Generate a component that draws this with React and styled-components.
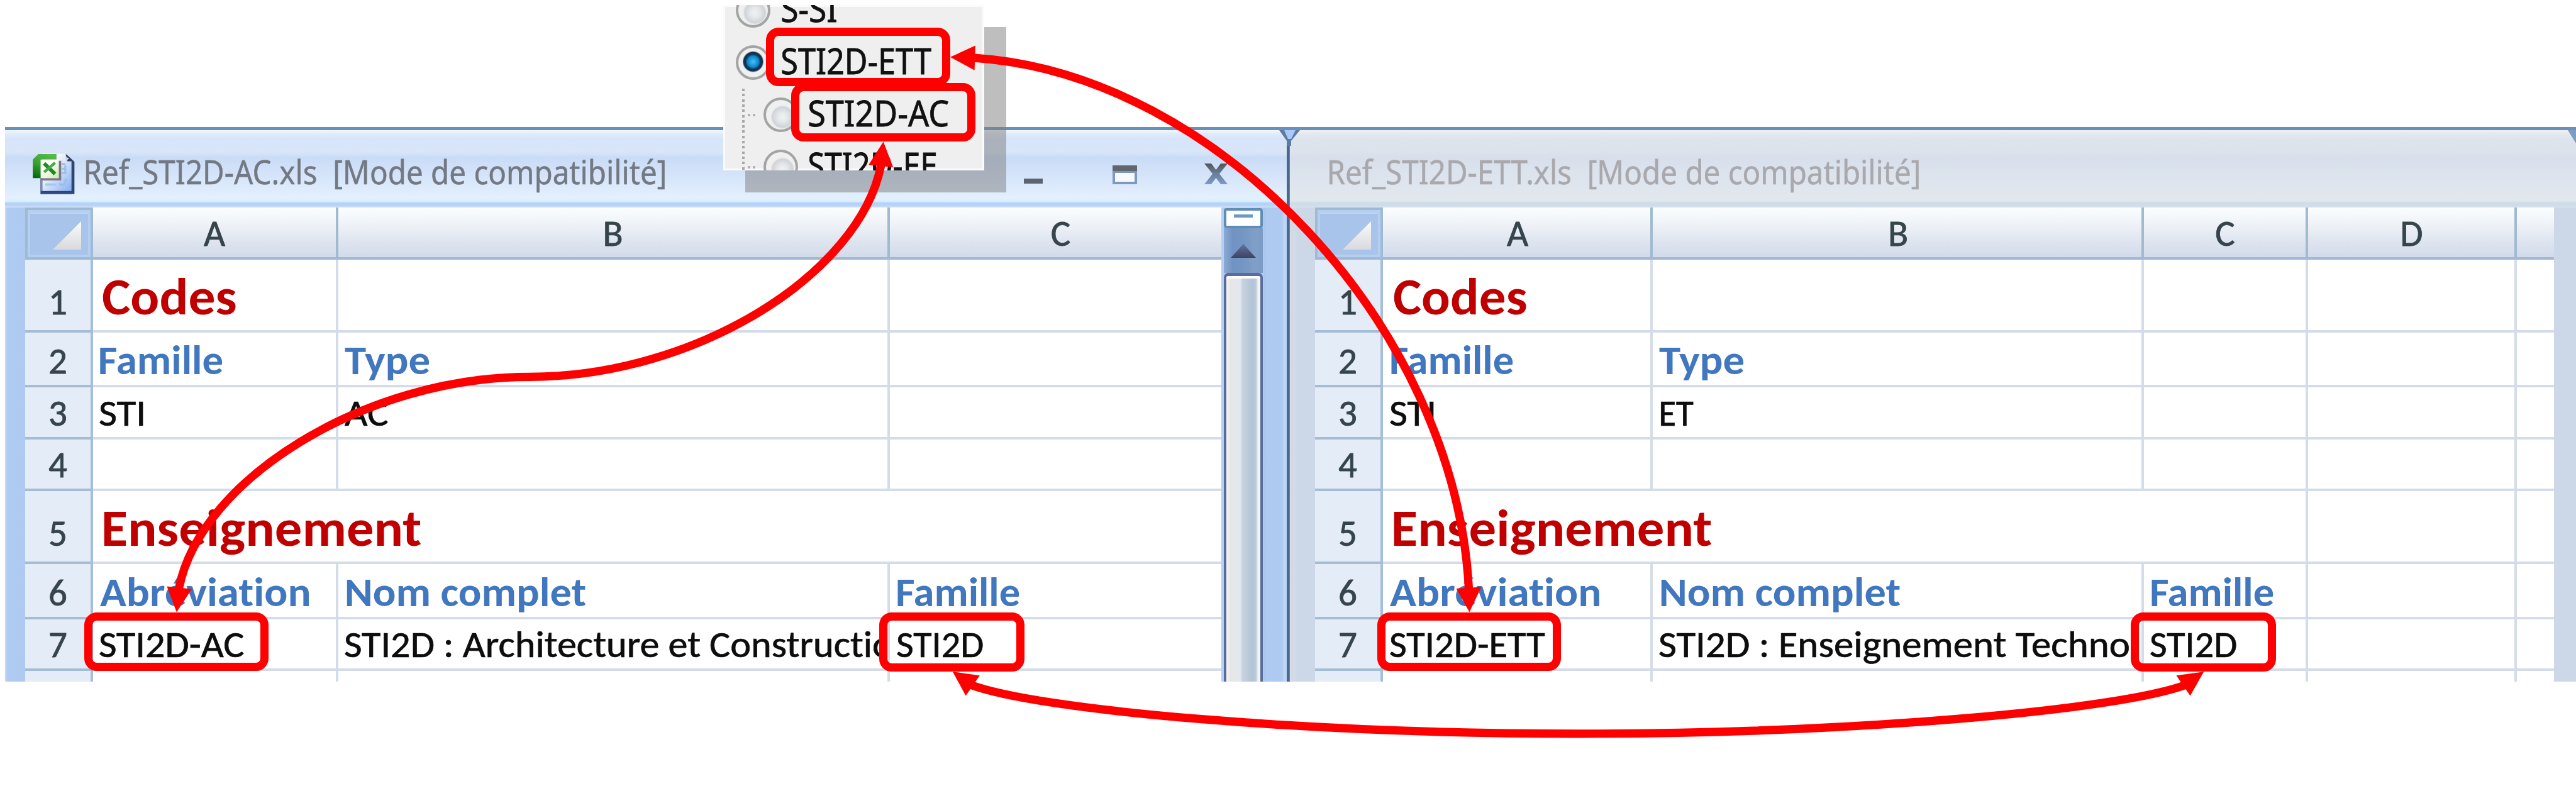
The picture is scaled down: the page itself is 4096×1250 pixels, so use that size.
import React from 'react';
import styled, { createGlobalStyle, css } from 'styled-components';

const GlobalStyle = createGlobalStyle`
  body {
    margin: 0;
    background: #fff;
    overflow: hidden;
  }
  * {
    box-sizing: border-box;
  }
`;

const SHEET_FONT = "Carlito, Lato, 'Liberation Sans', sans-serif";
const UI_FONT = "'Noto Sans', 'Open Sans', sans-serif";

/* ---------- text fitted to a given drawn width ---------- */

const FitBox = styled.span`
  display: inline-block;
  flex: none;
  width: ${(p) => p.$width}px;
  white-space: pre;
`;

const FitInner = styled.span`
  display: inline-block;
  transform-origin: 0 0;
  font-family: ${(p) => p.$family};
  font-size: ${(p) => p.$size}px;
  font-weight: ${(p) => p.$weight};
  font-variant-ligatures: none;
  line-height: ${(p) => p.$line}px;
  color: ${(p) => p.$color};
  -webkit-text-stroke: ${(p) => p.$stroke}px ${(p) => p.$color};
`;

const ruler = document.createElement('canvas').getContext('2d');

function FitText({ text, width, family, size, weight = 400, color, line, lift = 0, stroke = 0 }) {
  ruler.font = `${weight} ${size}px ${family}`;
  ruler.letterSpacing = '0.01px';
  const m = ruler.measureText(text);
  const scale = width / (m.actualBoundingBoxRight + m.actualBoundingBoxLeft);
  const shift = m.actualBoundingBoxLeft * scale;
  return (
    <FitBox $width={width}>
      <FitInner
        $family={family}
        $size={size}
        $weight={weight}
        $color={color}
        $stroke={stroke}
        $line={line || Math.round(size * 1.2)}
        style={{ transform: `translate(${shift}px, ${-lift}px) scaleX(${scale})` }}
      >
        {text}
      </FitInner>
    </FitBox>
  );
}

/* ---------- page ---------- */

const Page = styled.main`
  position: relative;
  width: 4096px;
  height: 1250px;
  overflow: hidden;
  background: #fff;
`;

const Windows = styled.div`
  display: flex;
  height: 1084px;
  padding: 202px 0 0 8px;
`;

const WindowFrame = styled.section`
  display: flex;
  flex: none;
  width: ${(p) => p.$width}px;
  border-top: 5px solid #6a90b8;
`;

const WindowMain = styled.div`
  display: flex;
  flex-direction: column;
  flex: 1;
  min-width: 0;
`;

const WindowEdge = styled.div`
  width: 5px;
  background: linear-gradient(90deg, #4a6c99, #46628a 60%, #7b8da8);
`;

const activeBar = css`
  background: linear-gradient(
    #f1f6fe 0, #e0ebfc 6px, #d7e5fa 14px, #d9e6f8 34px, #c9dcf6 44px,
    #d3e2f9 66px, #e3f0fe 108px, #d9f1ff 113px, #b4d2f8 116px, #b7d3f8 120px, #d6e3f7 123px
  );
`;

const inactiveBar = css`
  background: linear-gradient(
    #edf0f1 0, #e4e9ee 6px, #dde4ee 14px, #dce3ec 34px, #d8dfeb 44px,
    #dbe3ed 66px, #e2e7ee 104px, #e0e9ea 112px, #cddcec 116px, #cfdcea 120px, #dae2ec 123px
  );
`;

const TitleBar = styled.header`
  display: flex;
  flex: none;
  align-items: flex-start;
  height: 123px;
  padding: 35px 93px 0 ${(p) => (p.$active ? 43 : 63)}px;
  ${(p) => (p.$active ? activeBar : inactiveBar)}
`;

const TitleText = styled.h1`
  display: flex;
  margin: 0 auto 0 ${(p) => (p.$active ? 17 : 0)}px;
  font-size: 0;
`;

const ControlSvg = styled.svg`
  flex: none;
  margin: ${(p) => p.$top}px 0 0 ${(p) => p.$gap}px;
`;

const WindowBody = styled.div`
  display: flex;
  flex: 1;
`;

const frameTones = {
  activeLeft: 'linear-gradient(90deg, #c3dafa 0, #b0cbf1 4px, #aecaf0 100%)',
  activeRight: 'linear-gradient(90deg, #a9c5ea 0, #aecaf0 5px, #aecaf0 29px, #bdd6f8 33px, #bdd6f8 100%)',
  inactiveLeft: 'linear-gradient(90deg, #d5d9e0 0, #d2dbe8 8px, #ccd8e8 12px)',
  inactiveRight: 'linear-gradient(90deg, #ccd8e8, #ccd8e8)',
};

const FrameSide = styled.div`
  flex: none;
  width: ${(p) => p.$width}px;
  background: ${(p) => frameTones[p.$tone]};
`;

/* ---------- sheet ---------- */

const Sheet = styled.div`
  display: grid;
  flex: none;
  grid-template-columns: ${(p) => p.$columns};
  grid-template-rows: 83px 116px 87px 83px 82px 116px 88px 82px 17px;
  background: #fff;
`;

const Corner = styled.div`
  display: flex;
  border: 4px solid #a0bad4;
  background: #a9c4ea;
  box-shadow: inset 0 0 0 4px #b3cff2, inset 0 6px 0 0 #bfd5ea;
`;

const headText = css`
  font: 400 59px/71px ${SHEET_FONT};
  color: #35454b;
  -webkit-text-stroke: 0.8px #35454b;
`;

const ColumnHead = styled.div`
  display: flex;
  align-items: flex-end;
  justify-content: center;
  padding: 0 0 2px ${(p) => p.$shift}px;
  background: linear-gradient(#fbfdfe, #eef2f7 35%, #e0e6f0 65%, #d2daea);
  border-bottom: 4px solid #a2b9d4;
  border-right: ${(p) => (p.$last ? '0' : '4px solid #a0bad0')};
  ${headText}
`;

const RowHead = styled.div`
  display: flex;
  align-items: flex-end;
  justify-content: center;
  overflow: hidden;
  padding-bottom: ${(p) => (p.$tall ? 9 : 2)}px;
  background: #e4ecf7;
  border-right: 4px solid #a4bfd8;
  border-bottom: ${(p) => (p.$cut ? '0' : '4px solid #a5bdd4')};
  ${headText}
`;

const Cell = styled.div`
  display: flex;
  align-items: flex-end;
  overflow: hidden;
  min-width: 0;
  grid-column: span ${(p) => p.$span};
  padding: 0 0 ${(p) => p.$base}px ${(p) => p.$indent}px;
  border-right: ${(p) => (p.$last ? '0' : '4px solid #d5dce9')};
  border-bottom: ${(p) => (p.$cut ? '0' : '4px solid #d5dce9')};
  font-size: 0;
`;

const kinds = {
  title: { size: 82, weight: 700, color: '#c00000', base: 4, stroke: 0 },
  label: { size: 64, weight: 700, color: '#4177be', base: 0, stroke: 0 },
  value: { size: 59, weight: 400, color: '#0d0d0d', base: 2, stroke: 0.7 },
};

/* ---------- scroll bar ---------- */

const ScrollBar = styled.div`
  display: flex;
  flex-direction: column;
  flex: none;
  width: 67px;
  padding: 1px 1px 0 4px;
  background: #b3cff5;
`;

const SplitBox = styled.div`
  display: flex;
  justify-content: center;
  flex: none;
  height: 32px;
  padding-top: 6px;
  border: 4px solid #608db4;
  border-radius: 4px;
  background: #fcfeff;
`;

const SplitDash = styled.div`
  width: 30px;
  height: 5px;
  background: #6e98bd;
`;

const UpButton = styled.div`
  display: flex;
  justify-content: center;
  flex: none;
  height: 71px;
  padding-top: 25px;
  background: linear-gradient(90deg, #8dabd2, #7093c3 22%, #7596c3 50%, #809fc8 80%, #7b9bc6);
`;

const Thumb = styled.div`
  flex: 1;
  border: solid #5a6c99;
  border-width: 5px 4px 0;
  border-radius: 7px 7px 0 0;
  background: linear-gradient(
    90deg, #f8f8f8 0, #e6e6e6 6px, #e2e8ef 22px, #c5d1de 26px, #b3c4d7 42px, #bccbd9 47px, #f4f6f8 51px
  );
  box-shadow: inset 0 4px 0 #fbfbfb;
`;

/* ---------- option list ---------- */

const OptionShadow = styled.div`
  position: absolute;
  left: 1185px;
  top: 43px;
  width: 415px;
  height: 263px;
  background: rgba(126, 126, 126, 0.5);
`;

const OptionPanel = styled.div`
  position: absolute;
  left: 1150px;
  top: 8px;
  width: 415px;
  height: 263px;
  overflow: hidden;
  background: #efefef;
  box-shadow: inset 0 0 0 3px #fbfbfb;
`;

const OptionList = styled.ul`
  list-style: none;
  margin: -33px 0 0;
  padding: 0;
`;

const OptionRow = styled.li`
  display: flex;
  align-items: center;
  height: 83px;
  padding-left: ${(p) => (p.$nested ? 30 : 20)}px;
  font-size: 0;
`;

const Branch = styled.span`
  align-self: stretch;
  display: flex;
  align-items: center;
  gap: 4px;
  width: 34px;
  padding-left: 9px;
  background: repeating-linear-gradient(#a9a9a9 0 4px, #efefef 4px 8.3px) 0 0 / 4px 100% no-repeat;
`;

const Dot = styled.i`
  width: 4px;
  height: 4px;
  background: #b4b4b4;
`;

const Radio = styled.span`
  flex: none;
  width: 55px;
  height: 55px;
  margin-right: ${(p) => p.$gap}px;
  border: 4px solid #a3a5a3;
  border-radius: 50%;
  background: ${(p) =>
    p.$checked
      ? 'radial-gradient(circle at 50% 47%, #3fc6f0 0, #1d97dc 6px, #1582c4 9px, #0b3656 12px, #123450 15px, #f0f0f0 17px)'
      : 'radial-gradient(circle at 56% 58%, #f2f2f3 0, #e3e5e7 9px, #cfd3d8 16px, #f0f0f0 19px)'};
`;

/* ---------- annotations ---------- */

const Highlight = styled.div`
  position: absolute;
  left: ${(p) => p.$x}px;
  top: ${(p) => p.$y}px;
  width: ${(p) => p.$w}px;
  height: ${(p) => p.$h}px;
  border: 13px solid #f00;
  border-radius: 20px;
`;

const Arrows = styled.svg`
  position: absolute;
  inset: 0;
`;

function Arrow({ d, trim, heads }) {
  return (
    <g>
      <path
        d={d}
        pathLength="1000"
        fill="none"
        stroke="#f00"
        strokeWidth="13.2"
        strokeDasharray={`0 ${trim} ${1000 - 2 * trim} 1000`}
      />
      {heads.map((points) => (
        <polygon key={points} points={points} fill="#f00" />
      ))}
    </g>
  );
}

const IconSvg = styled.svg`
  flex: none;
`;

function WorkbookIcon() {
  return (
    <IconSvg width="69" height="68" viewBox="70 80 295 290">
      <defs>
        <linearGradient id="pageFill" x1="0" y1="0" x2="1" y2="1">
          <stop offset="0.3" stopColor="#f6f9ff" />
          <stop offset="1" stopColor="#86aef2" />
        </linearGradient>
        <linearGradient id="greenFill" x1="0.6" y1="0" x2="0.2" y2="1">
          <stop offset="0" stopColor="#55b94c" />
          <stop offset="0.5" stopColor="#35a02f" />
          <stop offset="1" stopColor="#006c05" />
        </linearGradient>
        <linearGradient id="tileFill" x1="0" y1="0" x2="1" y2="1">
          <stop offset="0.4" stopColor="#fbfff8" />
          <stop offset="1" stopColor="#cdeaa8" />
        </linearGradient>
      </defs>
      <path d="M128 96H305L358 145V364H128Z" fill="#2c4674" />
      <path d="M136 90H298L338 140V344H136Z" fill="url(#pageFill)" />
      <path d="M298 92L352 142H310Z" fill="#33415f" />
      <path d="M298 112L322 120L304 140Z" fill="#c9d2e2" />
      <path d="M128 260H140V350H338V364H128Z" fill="#2f4b80" />
      <path d="M128 264H137V344H128Z" fill="#8d98b8" />
      <path d="M272 160H296M272 192H296M272 222H290M296 168V228M256 290Q262 305 280 302Q298 298 298 262" fill="none" stroke="#9dbce8" strokeWidth="13" />
      <path d="M160 300H235" stroke="#a9c4ee" strokeWidth="16" />
      <path d="M134 256H252V138H268V272H134Z" fill="#7f7480" />
      <path d="M75 130L112 92H236V130H130V256H75Z" fill="url(#greenFill)" />
      <path d="M128 130H250V256H128Z" fill="url(#tileFill)" />
      <path d="M152 156L226 228" stroke="#1d8a22" strokeWidth="25" />
      <path d="M226 152L152 216" stroke="#49a64c" strokeWidth="19" />
    </IconSvg>
  );
}

function WindowControls() {
  return (
    <>
      <ControlSvg $top={42} $gap={0} width="30" height="8" viewBox="0 0 30 8">
        <rect width="30" height="8" fill="#5c6470" />
      </ControlSvg>
      <ControlSvg $top={21} $gap={111} width="39" height="30" viewBox="0 0 39 30">
        <rect x="2" y="2" width="35" height="26" fill="#f6faff" stroke="#7d99c2" strokeWidth="4" />
        <rect width="39" height="9" fill="#61656c" />
        <rect y="9" width="39" height="3" fill="#7d95ba" />
      </ControlSvg>
      <ControlSvg $top={17} $gap={106} width="39" height="35" viewBox="0 0 39 35">
        <defs>
          <linearGradient id="closeFill" x1="0" y1="0" x2="0" y2="1">
            <stop offset="0.05" stopColor="#55595e" />
            <stop offset="0.45" stopColor="#677c96" />
            <stop offset="1" stopColor="#7d9bc8" />
          </linearGradient>
        </defs>
        <path d="M1 1H12L19.500 11L27 1H38L25 17.500L38 34H27L19.500 24L12 34H1L14 17.500Z" fill="url(#closeFill)" />
      </ControlSvg>
    </>
  );
}

function CornerCell() {
  return (
    <Corner>
      <svg width="100" height="75" viewBox="0 0 100 75">
        <defs>
          <linearGradient id="cornerFill" x1="0" y1="0" x2="0" y2="1">
            <stop offset="0" stopColor="#fbfbfb" />
            <stop offset="1" stopColor="#d9dadf" />
          </linearGradient>
        </defs>
        <path d="M85 18V63H40Z" fill="url(#cornerFill)" />
      </svg>
    </Corner>
  );
}

/* ---------- data ---------- */

const rowFlags = [
  { n: '1', tall: true },
  { n: '2' },
  { n: '3' },
  { n: '4' },
  { n: '5', tall: true },
  { n: '6' },
  { n: '7' },
  { n: '', cut: true },
];

// A cell: [kind, text, drawn width, indent, column span]
const E = [];
const leftSheet = {
  columns: '108px 390px 877px 527px',
  heads: [['A', 0], ['B', 0], ['C', 16]],
  rows: [
    [['title', 'Codes', 212, 14.6], E, E],
    [['label', 'Famille', 195, 11], ['label', 'Type', 135, 9.5], E],
    [['value', 'STI', 70, 10], ['value', 'AC', 69, 9.5], E],
    [E, E, E],
    [['title', 'Enseignement', 505, 17, 3]],
    [['label', 'Abréviation', 332, 10.5], ['label', 'Nom complet', 381, 13], ['label', 'Famille', 194, 12]],
    [['value', 'STI2D-AC', 230, 10], ['value', 'STI2D : Architecture et Constructio', 870, 10], ['value', 'STI2D', 137, 11]],
    [E, E, E],
  ],
};

const rightSheet = {
  columns: '108px 429px 781px 261px 332px 59px',
  heads: [['A', 3], ['B', 3], ['C', 1], ['D', 1], ['', 0]],
  rows: [
    [['title', 'Codes', 211, 17], E, E, E, E],
    [['label', 'Famille', 194, 13], ['label', 'Type', 135, 10], E, E, E],
    [['value', 'STI', 70, 10.5], ['value', 'ET', 52, 13], E, E, E],
    [E, E, E, E, E],
    [['title', 'Enseignement', 506, 17, 3], E, E],
    [['label', 'Abréviation', 333, 10.5], ['label', 'Nom complet', 381, 13], ['label', 'Famille', 194, 12], E, E],
    [['value', 'STI2D-ETT', 247, 10.5], ['value', 'STI2D : Enseignement Techno', 747, 10], ['value', 'STI2D', 137, 10], E, E],
    [E, E, E, E, E],
  ],
};

function SheetView({ sheet }) {
  return (
    <Sheet $columns={sheet.columns}>
      <CornerCell />
      {sheet.heads.map(([name, shift], i) => (
        <ColumnHead key={i} $shift={shift} $last={i === sheet.heads.length - 1}>
          {name}
        </ColumnHead>
      ))}
      {sheet.rows.map((cells, r) => (
        <React.Fragment key={r}>
          <RowHead $tall={rowFlags[r].tall} $cut={rowFlags[r].cut}>
            {rowFlags[r].n}
          </RowHead>
          {cells.map(([kind, text, width, indent = 0, span = 1], c) => {
            const k = kinds[kind] || {};
            return (
              <Cell
                key={c}
                $span={span}
                $indent={indent}
                $base={k.base || 0}
                $last={c === cells.length - 1}
                $cut={rowFlags[r].cut}
              >
                {text && (
                  <FitText
                    text={text}
                    width={width}
                    family={SHEET_FONT}
                    size={k.size}
                    weight={k.weight}
                    color={k.color}
                    stroke={k.stroke}
                  />
                )}
              </Cell>
            );
          })}
        </React.Fragment>
      ))}
    </Sheet>
  );
}

const optionText = { family: UI_FONT, size: 56, color: '#111', line: 76, lift: 4, stroke: 0.8 };
const titleText = { family: UI_FONT, size: 52, line: 70, lift: 4, stroke: 0.5 };

export default function App() {
  return (
    <Page>
      <GlobalStyle />
      <Windows>
        <WindowFrame $width={2043}>
          <WindowMain>
            <TitleBar $active>
              <WorkbookIcon />
              <TitleText $active>
                <FitText
                  text={'Ref_STI2D-AC.xls\u00a0 [Mode de compatibilité]'}
                  width={920}
                  color="#737983"
                  {...titleText}
                />
              </TitleText>
              <WindowControls />
            </TitleBar>
            <WindowBody>
              <FrameSide $width={32} $tone="activeLeft" />
              <SheetView sheet={leftSheet} />
              <ScrollBar>
                <SplitBox>
                  <SplitDash />
                </SplitBox>
                <UpButton>
                  <svg width="40" height="22" viewBox="0 0 40 22">
                    <defs>
                      <linearGradient id="upFill" x1="0" y1="0" x2="0" y2="1">
                        <stop offset="0" stopColor="#65719a" />
                        <stop offset="1" stopColor="#3b4563" />
                      </linearGradient>
                    </defs>
                    <path d="M20 0L40 22H0Z" fill="url(#upFill)" />
                  </svg>
                </UpButton>
                <Thumb />
              </ScrollBar>
              <FrameSide $width={37} $tone="activeRight" />
            </WindowBody>
          </WindowMain>
          <WindowEdge />
        </WindowFrame>
        <WindowFrame $width={2045}>
          <WindowMain>
            <TitleBar>
              <TitleText>
                <FitText
                  text={'Ref_STI2D-ETT.xls\u00a0 [Mode de compatibilité]'}
                  width={937}
                  color="#a9a9ad"
                  {...titleText}
                />
              </TitleText>
            </TitleBar>
            <WindowBody>
              <FrameSide $width={40} $tone="inactiveLeft" />
              <SheetView sheet={rightSheet} />
              <FrameSide $width={35} $tone="inactiveRight" />
            </WindowBody>
          </WindowMain>
        </WindowFrame>
      </Windows>

      <OptionShadow />
      <OptionPanel>
        <OptionList>
          <OptionRow>
            <Radio $gap={18} />
            <FitText text="S-SI" width={87} {...optionText} />
          </OptionRow>
          <OptionRow>
            <Radio $checked $gap={18} />
            <FitText text="STI2D-ETT" width={238} {...optionText} />
          </OptionRow>
          <OptionRow $nested>
            <Branch>
              <Dot />
              <Dot />
            </Branch>
            <Radio $gap={17} />
            <FitText text="STI2D-AC" width={222} {...optionText} />
          </OptionRow>
          <OptionRow $nested>
            <Branch>
              <Dot />
              <Dot />
            </Branch>
            <Radio $gap={17} />
            <FitText text="STI2D-EE" width={202} {...optionText} />
          </OptionRow>
        </OptionList>
      </OptionPanel>

      <Highlight $x={1218} $y={44} $w={293} $h={93} />
      <Highlight $x={1258} $y={132} $w={293} $h={93} />
      <Highlight $x={134} $y={974} $w={293} $h={93} />
      <Highlight $x={1398} $y={974} $w={231} $h={94} />
      <Highlight $x={2190} $y={974} $w={292} $h={93} />
      <Highlight $x={3388} $y={974} $w={231} $h={94} />

      <Arrows width="4096" height="1250" viewBox="0 0 4096 1250">
        <path d="M2034 207H2067L2053 224V232H2046V224Z" fill="#5d7ba3" />
        <path d="M2042 207H2060L2053 221H2048Z" fill="#a9caf8" />
        <path d="M4083 207H4096V228Z" fill="#7f9dbf" />
        <Arrow
          d="M1511 90.800C1923.800 90.800 2336.500 532.200 2336.500 973.600"
          trim={29}
          heads={['1511,90.800 1550.800,72.600 1549.600,111.700', '2336.500,973.600 2315.600,935.900 2355.300,933.400']}
        />
        <Arrow
          d="M1404.600 225.200C1404.600 412.200 1123.600 599.300 842.700 599.300S280.800 786.300 280.800 973.400"
          trim={26}
          heads={['1404.600,225.200 1381.200,262.200 1420.200,266.100', '280.800,973.400 265.400,932.600 305,936.700']}
        />
        <Arrow
          d="M1514.800 1068.300C1514.800 1117.500 2012 1166.800 2509.500 1166.800S3504.200 1117.500 3504.200 1068.300"
          trim={17}
          heads={['1514.800,1068.300 1557.800,1074.200 1535.700,1106.400', '3504.200,1068.300 3460.500,1074.200 3482.600,1106.400']}
        />
      </Arrows>
    </Page>
  );
}
